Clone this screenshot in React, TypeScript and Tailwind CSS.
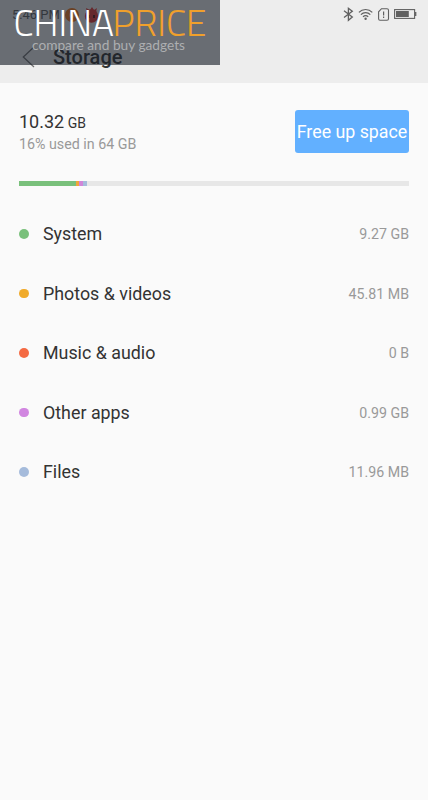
import React from "react";

interface ICategory {
  label: string;
  size: string;
  dot: string;
}

const categories: ICategory[] = [
  { label: "System", size: "9.27 GB", dot: "bg-[#79c07b]" },
  { label: "Photos & videos", size: "45.81 MB", dot: "bg-[#f0ab2c]" },
  { label: "Music & audio", size: "0 B", dot: "bg-[#f46a43]" },
  { label: "Other apps", size: "0.99 GB", dot: "bg-[#d186e0]" },
  { label: "Files", size: "11.96 MB", dot: "bg-[#a5bbdb]" }
];

function StatusIcons() {
  return (
    <svg width="76" height="16" viewBox="0 0 76 16" fill="none" stroke="#606060">
      <path d="M2 4.8 10.3 11 6.4 14.3V2.2l3.9 3L2 11.6" strokeWidth="1.3" />

      <g strokeWidth="1.2">
        <path d="M16.9 6.4C20.6 2.5 26.6 2.5 30.3 6.4" />
        <path d="M18.9 8.7C21.5 5.9 25.7 5.9 28.3 8.7" />
        <path d="M21 10.9C22.5 9.3 24.7 9.3 26.2 10.9" />
      </g>
      <circle cx="23.6" cy="12.8" r="1.2" fill="#606060" stroke="none" />

      <path
        d="M39.5 2.7h5.5q1.5 0 1.5 1.5v8.6q0 1.4-1.5 1.4h-7q-1.4 0-1.4-1.4V5.8z"
        strokeWidth="1.1"
      />
      <path d="M41.6 5.5v4M41.6 10.5v1.4" strokeWidth="1.2" />

      <rect x="52.6" y="3.6" width="20" height="8.8" strokeWidth="1.1" />
      <path d="M54 5h12.8v6H54z" fill="#606060" stroke="none" />
      <path d="M73.7 6v4" strokeWidth="1.3" />
    </svg>
  );
}

function Watermark() {
  return (
    <div className="absolute left-0 top-0 h-[65px] w-[220px] bg-[#181f28]/62">
      <svg
        width="220"
        height="65"
        viewBox="0 0 220 65"
        className="font-['Titillium_Web',Roboto,sans-serif]"
      >
        <text
          x="13.5"
          y="36"
          fontSize="37"
          fontWeight="300"
          fill="#fff"
          textLength="100.5"
          lengthAdjust="spacingAndGlyphs"
        >
          CHINA
        </text>
        <text
          x="112.5"
          y="36"
          fontSize="37"
          fontWeight="300"
          fill="#f0a02c"
          textLength="94"
          lengthAdjust="spacingAndGlyphs"
        >
          PRICE
        </text>
        <text
          x="32"
          y="50.4"
          fontSize="14"
          fill="#adafb1"
          textLength="153"
          lengthAdjust="spacingAndGlyphs"
          className="font-[Lato,sans-serif]"
        >
          compare and buy gadgets
        </text>
      </svg>
    </div>
  );
}

export default function App() {
  return (
    <main className="relative h-[800px] w-full overflow-hidden bg-[#fafafa] font-[Roboto,sans-serif] text-[#333]">
      <header className="h-[83px] bg-[#ededed]">
        <div className="flex h-[28px] items-center justify-between pl-[12px] pr-[10px]">
          <div className="flex items-center gap-[5px] pt-[2px] text-[13px] text-[#606060]">
            <span>5:46 PM</span>
            <span className="flex size-[14px] items-center justify-center rounded-full bg-[#f07a20]">
              <span className="size-[6px] rounded-full bg-[#ffa04a]" />
            </span>
            <svg width="15" height="16" viewBox="0 0 15 16">
              <path d="M3 5 2 1l4 2 2-3 2 3 3-2-1 4z" fill="#e53935" />
              <circle cx="7.5" cy="9" r="6.7" fill="#e53935" />
              <path d="M4 8h2v3H4zM9 8h2v3H9z" fill="#5a1715" />
            </svg>
          </div>

          <StatusIcons />
        </div>

        <div className="flex h-[58px] items-center gap-[18px] pl-[22px]">
          <svg width="13" height="22" viewBox="0 0 13 22" fill="none">
            <path d="M12 1 1.3 11 12 21" stroke="#707070" strokeWidth="1.3" />
          </svg>
          <h1 className="text-[20px] font-medium leading-[24px] text-[#333]">
            Storage
          </h1>
        </div>
      </header>

      <section className="px-[19px] pt-[26px]">
        <div className="flex h-[44px] items-center justify-between">
          <div>
            <p className="text-[18px] leading-[23px]">
              10.32 <span className="-ml-px text-[14px]">GB</span>
            </p>
            <p className="text-[14.25px] leading-[18px] text-[#999]">
              16% used in 64 GB
            </p>
          </div>

          <button className="h-[43px] w-[114px] whitespace-nowrap rounded-[3px] bg-[#62b0ff] pt-[2px] text-center text-[17.8px] text-white">
            Free up space
          </button>
        </div>

        <div className="mt-[28px] flex h-[5px] bg-[#e7e7e7]">
          <div className="w-[57px] bg-[#79c07b]" />
          <div className="w-[3px] bg-[#f0a53c]" />
          <div className="w-[4px] bg-[#d186d8]" />
          <div className="w-[4px] bg-[#a5bbdb]" />
        </div>

        <ul className="mt-[18px]">
          {categories.map((c) => (
            <li key={c.label} className="flex h-[59.5px] items-center">
              <span className={`size-[9.5px] rounded-full ${c.dot}`} />
              <span className="ml-[14.5px] flex-1 pt-[1.8px] text-[17.85px]">
                {c.label}
              </span>
              <span className="pt-[1.8px] text-[14.2px] text-[#999]">
                {c.size}
              </span>
            </li>
          ))}
        </ul>
      </section>

      <Watermark />
    </main>
  );
}
